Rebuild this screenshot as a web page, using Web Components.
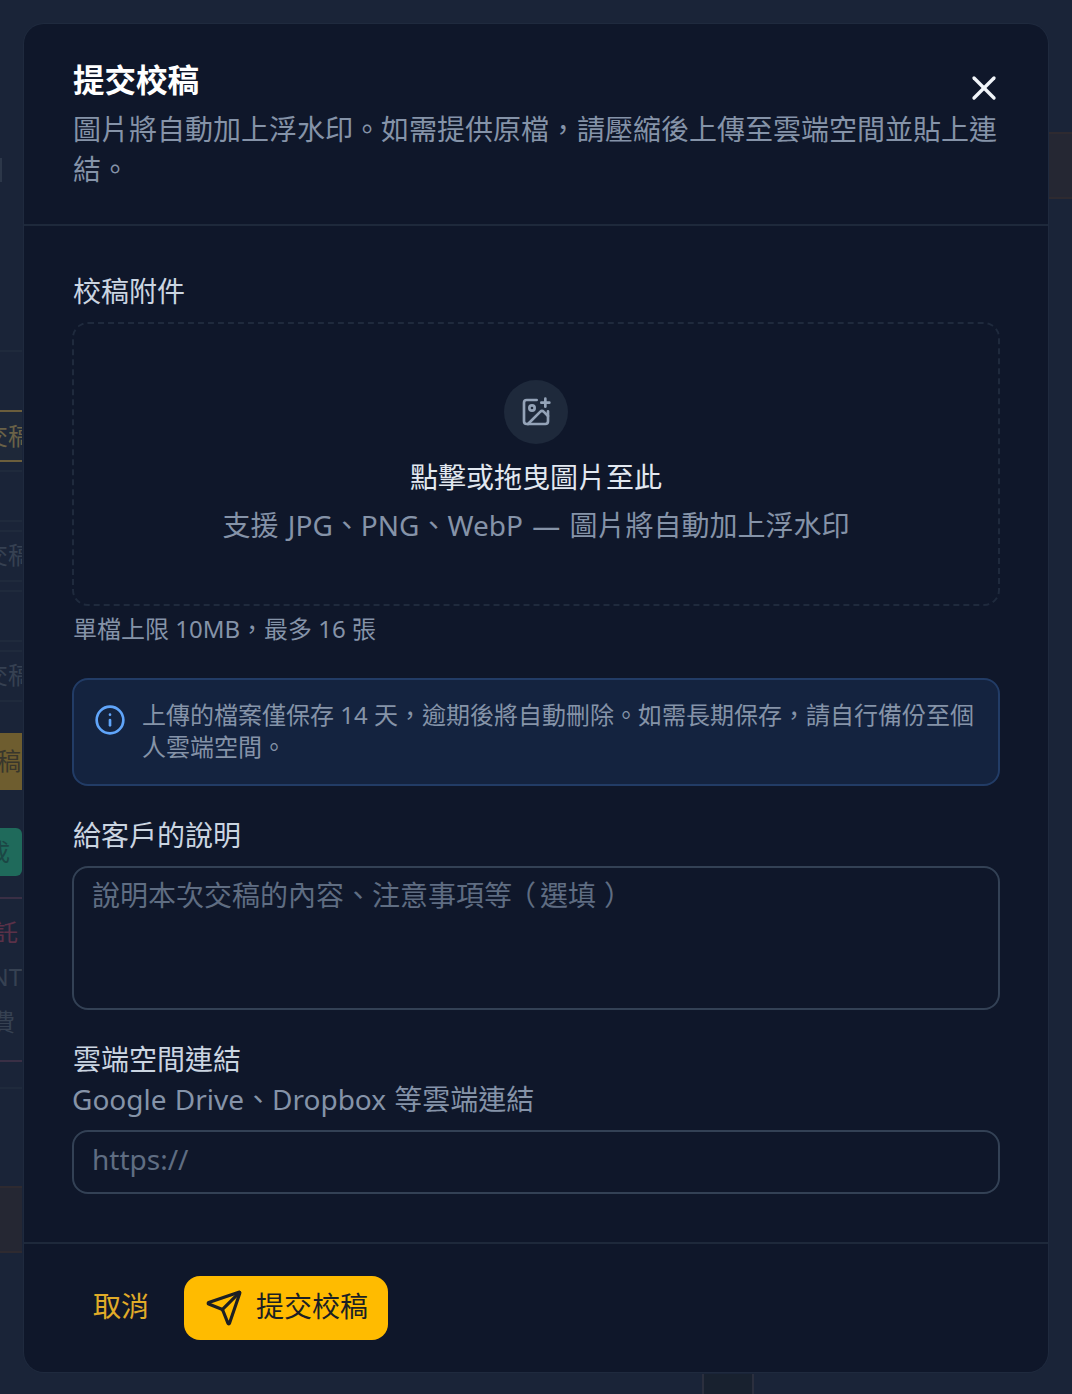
<!DOCTYPE html>
<html lang="zh-Hant">
<head>
<meta charset="utf-8">
<title>提交校稿</title>
<style>
  html, body { margin: 0; padding: 0; background: #1a2438; }
  body { font-family: "Noto Sans", "Noto Sans CJK TC", sans-serif; }
</style>
</head>
<body>
<page-shell>
  <side-rail slot="left" side="left"></side-rail>
  <submit-modal></submit-modal>
  <side-rail slot="right" side="right"></side-rail>
</page-shell>

<script>
const ICONS = {
  close: '<path d="M18 6 6 18"/><path d="m6 6 12 12"/>',
  imagePlus: '<path d="M16 5h6"/><path d="M19 2v6"/><path d="M21 11.5V19a2 2 0 0 1-2 2H5a2 2 0 0 1-2-2V5a2 2 0 0 1 2-2h7.5"/><path d="m21 15-3.086-3.086a2 2 0 0 0-2.828 0L6 21"/><circle cx="9" cy="9" r="2"/>',
  info: '<circle cx="12" cy="12" r="10"/><path d="M12 16v-4"/><path d="M12 8h.01"/>',
  send: '<path d="M14.536 21.686a.5.5 0 0 0 .937-.024l6.5-19a.496.496 0 0 0-.635-.635l-19 6.5a.5.5 0 0 0-.024.937l7.93 3.18a2 2 0 0 1 1.112 1.11z"/><path d="m21.854 2.147-10.94 10.939"/>'
};

function icon(name, size) {
  return `<svg width="${size}" height="${size}" viewBox="0 0 24 24" fill="none" stroke="currentColor" stroke-width="2" stroke-linecap="round" stroke-linejoin="round">${ICONS[name]}</svg>`;
}

class PageShell extends HTMLElement {
  constructor() {
    super();
    this.attachShadow({mode: 'open'}).innerHTML = `
      <style>
        :host {
          display: grid;
          grid-template-columns: 24px 1fr 24px;
          height: 1394px;
          overflow: hidden;
          background: #1a2438;
        }
        .middle { min-width: 0; display: flex; flex-direction: column; padding-top: 24px; }
        .bottom {
          margin: 2px 0 0 678px;
          width: 52px;
          height: 20px;
          border-left: 2px solid #2b2f3e;
          border-right: 2px solid #2b2f3e;
          background: #18212f;
          box-sizing: border-box;
        }
      </style>
      <slot name="left"></slot>
      <div class="middle"><slot></slot><div class="bottom"></div></div>
      <slot name="right"></slot>
    `;
  }
}

class SideRail extends HTMLElement {
  constructor() {
    super();
    this.shadowDOM = this.attachShadow({mode: 'open'});
  }

  connectedCallback() {
    this.render(this.getAttribute('side') === 'left' ? this.leftRows() : this.rightRows());
  }

  // [top, height, class, text, text inset from the right]; tops are turned into gaps in render()
  leftRows() {
    return [
      [158, 24, 'tick', ''],
      [350, 2, 'line', ''],
      [410, 52, 'gold-outline', '交稿', -10],
      [470, 2, 'line', ''],
      [520, 2, 'line', ''],
      [530, 2, 'line', ''],
      [540, 30, 'muted', '交稿', -10],
      [580, 2, 'line', ''],
      [590, 2, 'line', ''],
      [640, 2, 'line', ''],
      [650, 2, 'line', ''],
      [660, 30, 'muted', '交稿', -10],
      [700, 2, 'line', ''],
      [733, 57, 'gold-fill', '交稿', 1],
      [828, 48, 'green-fill', '完成', 12],
      [897, 2, 'pink-line', ''],
      [917, 30, 'pink-text', '委託', 4],
      [963, 30, 'muted', 'NT', 0],
      [1007, 30, 'muted', '費', 7],
      [1060, 2, 'pink-line', ''],
      [1087, 2, 'line', ''],
      [1186, 67, 'brown-left', '']
    ];
  }

  rightRows() {
    return [
      [132, 67, 'brown-right', '']
    ];
  }

  render(rows) {
    let y = 0;
    const html = rows.map(([top, h, cls, text, inset]) => {
      const row = `<div class="${cls}" style="margin-top:${top - y}px;height:${h}px"><span style="margin-right:${inset || 0}px">${text}</span></div>`;
      y = top + h;
      return row;
    }).join('');
    this.shadowDOM.innerHTML = `
      <style>
        :host { display: flex; flex-direction: column; overflow: hidden; font-size: 24px; color: #364152; }
        div {
          box-sizing: border-box;
          flex: none;
          display: flex;
          align-items: center;
          justify-content: flex-end;
          overflow: hidden;
          white-space: nowrap;
          margin-right: 2px;
        }
        span { position: relative; top: -2px; }
        :host([side="right"]) div { margin-right: 0; margin-left: 1px; }
        .tick { width: 2px; background: #2c3749; }
        .line { background: #1f2a3c; }
        .pink-line { background: #3a2f45; }
        .gold-outline { border-top: 2px solid #6b5e3c; border-bottom: 2px solid #6b5e3c; color: #6a6247; background: #1e2839; }
        .gold-fill { background: #6e5d2f; color: #38362c; }
        .green-fill { background: #1f6a5b; color: #1b4644; border-radius: 0 6px 6px 0; }
        .pink-text { color: #5b3148; }
        .brown-left { background: #252733; border-top: 2px solid #2e2a30; border-bottom: 2px solid #2e2a30; }
        .brown-right { background: #252733; border-top: 2px solid #2e2a30; border-bottom: 2px solid #2e2a30; }
      </style>
      ${html}
    `;
  }
}

class SubmitModal extends HTMLElement {
  constructor() {
    super();
    this.attachShadow({mode: 'open'}).innerHTML = `
      <style>
        :host {
          display: flex;
          flex-direction: column;
          box-sizing: border-box;
          height: 1348px;
          flex: none;
          background: #0f172a;
          box-shadow: 0 0 0 1px #1f2a3e;
          border-radius: 20px;
          color: #cbd5e1;
          font-size: 28px;
          line-height: 40px;
        }
        header {
          position: relative;
          padding: 34px 48px 35px 49px;
          border-bottom: 2px solid #1e293b;
        }
        h2 {
          margin: 0 0 7px;
          font-size: 31.5px;
          line-height: 44px;
          font-weight: 700;
          color: #fff;
        }
        header p { margin: 0; color: #8593a8; }
        .close {
          position: absolute;
          top: 44px;
          right: 44px;
          display: flex;
          color: #f1f5f9;
        }
        main {
          flex: 1;
          padding: 45px 48px 0;
          display: flex;
          flex-direction: column;
        }
        footer {
          border-top: 2px solid #1e293b;
          padding: 32px 49px;
          display: flex;
          gap: 15px;
        }
      </style>
      <header>
        <h2>提交校稿</h2>
        <p>圖片將自動加上浮水印。如需提供原檔，請壓縮後上傳至雲端空間並貼上連結。</p>
        <span class="close">${icon('close', 40)}</span>
      </header>
      <main>
        <form-field label="校稿附件" gap="11">
          <upload-zone></upload-zone>
        </form-field>
        <field-note>單檔上限 10MB，最多 16 張</field-note>
        <info-note>上傳的檔案僅保存 14 天，逾期後將自動刪除。如需長期保存，請自行備份至個人雲端空間。</info-note>
        <form-field label="給客戶的說明" gap="11" style="margin-top:29px">
          <text-box rows="tall">說明本次交稿的內容、注意事項<span class="pull">等</span><span class="open">（</span>選填<span class="shut">）</span></text-box>
        </form-field>
        <form-field label="雲端空間連結" hint="Google Drive、Dropbox 等雲端連結" gap="11" style="margin-top:29px">
          <text-box>https://</text-box>
        </form-field>
      </main>
      <footer>
        <ghost-button>取消</ghost-button>
        <primary-button>提交校稿</primary-button>
      </footer>
    `;
  }
}

class FormField extends HTMLElement {
  constructor() {
    super();
    this.shadowDOM = this.attachShadow({mode: 'open'});
  }

  connectedCallback() {
    const hint = this.getAttribute('hint');
    this.shadowDOM.innerHTML = `
      <style>
        :host { display: block; }
        label { display: block; color: #cbd5e1; padding-left: 1px; }
        .hint { color: #8593a8; word-spacing: 1px; }
        .control { margin-top: ${this.getAttribute('gap')}px; }
      </style>
      <label>${this.getAttribute('label')}</label>
      ${hint ? `<div class="hint">${hint}</div>` : ''}
      <div class="control"><slot></slot></div>
    `;
  }
}

class UploadZone extends HTMLElement {
  constructor() {
    super();
    this.attachShadow({mode: 'open'}).innerHTML = `
      <style>
        :host {
          display: flex;
          flex-direction: column;
          align-items: center;
          box-sizing: border-box;
          height: 284px;
          padding-top: 56px;
          border: 2px dashed #1f2a3d;
          border-radius: 16px;
        }
        .circle {
          width: 64px;
          height: 64px;
          border-radius: 50%;
          background: #1e293b;
          color: #94a3b8;
          display: flex;
          align-items: center;
          justify-content: center;
        }
        .title { margin-top: 13px; color: #e2e8f0; }
        .sub { margin-top: 8px; color: #8593a8; word-spacing: 2px; }
      </style>
      <div class="circle">${icon('imagePlus', 32)}</div>
      <div class="title">點擊或拖曳圖片至此</div>
      <div class="sub">支援 JPG、PNG、WebP — 圖片將自動加上浮水印</div>
    `;
  }
}

class FieldNote extends HTMLElement {
  constructor() {
    super();
    this.attachShadow({mode: 'open'}).innerHTML = `
      <style>
        :host { display: block; margin-top: 7px; padding-left: 1px; font-size: 24px; line-height: 32px; color: #8593a8; }
      </style>
      <slot></slot>
    `;
  }
}

class InfoNote extends HTMLElement {
  constructor() {
    super();
    this.attachShadow({mode: 'open'}).innerHTML = `
      <style>
        :host {
          display: flex;
          gap: 16px;
          box-sizing: border-box;
          margin-top: 33px;
          padding: 19px 20px 21px;
          background: #14233f;
          border: 2px solid #223c66;
          border-radius: 16px;
          font-size: 24px;
          line-height: 32px;
          color: #8593a8;
        }
        svg { flex: none; margin-top: 5px; color: #60a5fa; }
      </style>
      ${icon('info', 32)}
      <div><slot></slot></div>
    `;
  }
}

class TextBox extends HTMLElement {
  constructor() {
    super();
    this.attachShadow({mode: 'open'}).innerHTML = `
      <style>
        :host {
          display: block;
          box-sizing: border-box;
          height: 64px;
          padding: 7px 18px;
          background: transparent;
          border: 2px solid #334155;
          border-radius: 16px;
          color: #5f6d82;
        }
        :host([rows="tall"]) { height: 144px; }
        ::slotted(.pull) { letter-spacing: -4px; }
        ::slotted(.open) { letter-spacing: 4px; }
        ::slotted(.shut) { display: inline-block; transform: translateX(8px); }
      </style>
      <slot></slot>
    `;
  }
}

class GhostButton extends HTMLElement {
  constructor() {
    super();
    this.attachShadow({mode: 'open'}).innerHTML = `
      <style>
        :host {
          display: flex;
          align-items: center;
          box-sizing: border-box;
          padding: 0 20px 4px;
          height: 64px;
          color: #e0ab28;
        }
      </style>
      <slot></slot>
    `;
  }
}

class PrimaryButton extends HTMLElement {
  constructor() {
    super();
    this.attachShadow({mode: 'open'}).innerHTML = `
      <style>
        :host {
          display: flex;
          align-items: center;
          gap: 13px;
          padding: 0 20px 0 21px;
          height: 64px;
          background: #ffbb00;
          border-radius: 16px;
          color: #1c1f24;
        }
        span { margin-bottom: 4px; }
      </style>
      ${icon('send', 38)}
      <span><slot></slot></span>
    `;
  }
}

customElements.define('page-shell', PageShell);
customElements.define('side-rail', SideRail);
customElements.define('submit-modal', SubmitModal);
customElements.define('form-field', FormField);
customElements.define('upload-zone', UploadZone);
customElements.define('field-note', FieldNote);
customElements.define('info-note', InfoNote);
customElements.define('text-box', TextBox);
customElements.define('ghost-button', GhostButton);
customElements.define('primary-button', PrimaryButton);
</script>
</body>
</html>
